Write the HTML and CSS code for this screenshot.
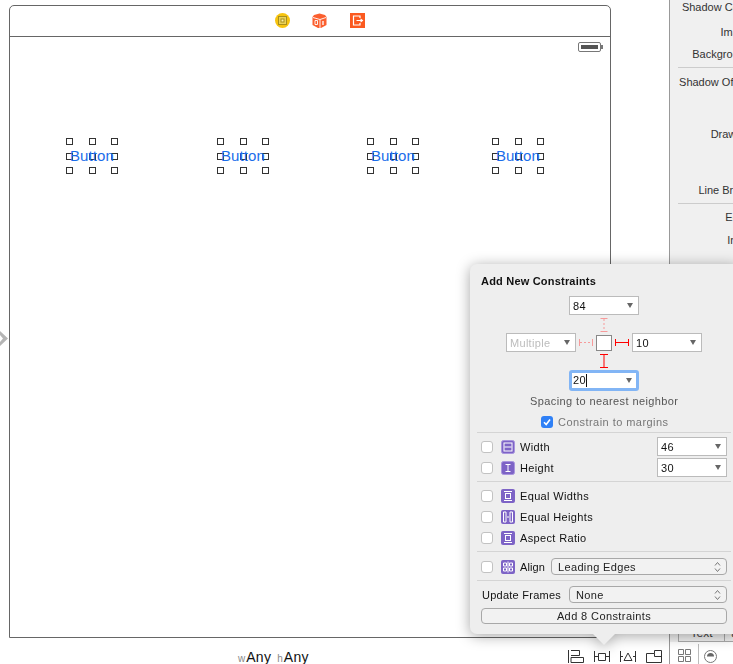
FILE: index.html
```html
<!DOCTYPE html>
<html lang="en">
  <head>
    <meta charset="UTF-8" />
    <title>Add New Constraints</title>
    <link rel="stylesheet" href="styles.css">
  </head>
  <body>
    <div class="page">
      <div class="canvas">
        <div class="frame">
          <div class="dock">
            <svg class="dock-icon" viewBox="0 0 15 15">
              <circle cx="7.5" cy="7.5" r="7.5" fill="#f7c40f" />
              <rect x="3.5" y="3.5" width="8" height="8" fill="#e9d25a" stroke="#a98f1c" />
              <rect x="6" y="6" width="3" height="3" fill="#fff3a8" stroke="#a98f1c" />
            </svg>
            <svg class="dock-icon" viewBox="0 0 15 15">
              <path d="M7.5 0.5 L13 2 L14.500 4 V12 L9 15 H6 L0.500 12 V4 L2 2 Z" fill="#fb5f2e" />
              <path d="M1 4.500 L8 6.500 L14 4.500 M8 6.500 V15" fill="none" stroke="#fff" stroke-width="0.9" />
              <path d="M3 7.500 H5.500 V11.500 H3 Z" fill="none" stroke="#fff" stroke-width="0.9" />
              <path d="M11 8 V12" stroke="#fff" stroke-width="1.300" />
            </svg>
            <svg class="dock-icon" viewBox="0 0 15 15">
              <rect width="15" height="15" fill="#fb5a20" />
              <path d="M10 5 V3 H3.500 V12 H10 V10" fill="none" stroke="#fff" stroke-width="1.200" />
              <path d="M6.500 7.500 H12.500 M10.500 5.800 L12.500 7.500 L10.500 9.200" fill="none" stroke="#fff" stroke-width="1.100" />
            </svg>
          </div>
          <div class="screen">
            <div class="status">
              <div class="battery"><div class="battery-fill"></div></div>
            </div>
            <div class="buttons">
              <div class="sel">
                <i></i><i></i><i></i><i></i><i></i><i></i><i></i><i></i><i></i>
                <span class="btn-label">Button</span>
              </div>
              <div class="sel">
                <i></i><i></i><i></i><i></i><i></i><i></i><i></i><i></i><i></i>
                <span class="btn-label">Button</span>
              </div>
              <div class="sel">
                <i></i><i></i><i></i><i></i><i></i><i></i><i></i><i></i><i></i>
                <span class="btn-label">Button</span>
              </div>
              <div class="sel">
                <i></i><i></i><i></i><i></i><i></i><i></i><i></i><i></i><i></i>
                <span class="btn-label">Button</span>
              </div>
            </div>
          </div>
        </div>
      </div>

      <div class="inspector">
        <div class="prop">Shadow Color</div>
        <div class="prop prop-image">Image</div>
        <div class="prop prop-bg">Background</div>
        <div class="sep-line"></div>
        <div class="prop prop-after-sep">Shadow Offset</div>
        <div class="prop prop-drawing">Drawing</div>
        <div class="prop prop-break">Line Break</div>
        <div class="sep-line"></div>
        <div class="prop prop-edge">Edge</div>
        <div class="prop prop-inset">Inset</div>
        <div class="mini-table">
          <div class="mini-cell">Text</div>
          <div class="mini-cell">a</div>
        </div>
      </div>

      <div class="bar">
        <div class="size-class">
          <span class="size-key">w</span><span class="size-val">Any</span>
          <span class="size-key size-key-h">h</span><span class="size-val">Any</span>
        </div>
        <div class="bar-icons">
          <svg class="bar-icon" viewBox="0 0 16 13">
            <path d="M0.500 0 V13 M3 0.500 H11.500 V5.500 H3 M3 7.500 H15.500 V12.500 H3 Z" fill="none" stroke="#333" />
          </svg>
          <svg class="bar-icon" viewBox="0 0 16 13">
            <path d="M0.500 1 V12 M15.500 1 V12 M1 6.500 H4 M12 6.500 H15 M4.500 3.500 H11.500 V10.500 H4.500 Z" fill="none" stroke="#333" />
          </svg>
          <svg class="bar-icon" viewBox="0 0 16 13">
            <path d="M0.500 1 V12 M15.500 1 V12 M1 6.500 H3 M13 6.500 H15 M8 3 L12 10.500 H4 Z" fill="none" stroke="#333" />
          </svg>
          <svg class="bar-icon" viewBox="0 0 16 13">
            <path d="M0.500 3.500 H8.500 V0.500 H15.500 V12.500 H0.500 Z M8.500 3.500 V6.500 H15.500" fill="none" stroke="#333" />
          </svg>
        </div>
      </div>

      <div class="bar-right">
        <svg class="grid-icon" viewBox="0 0 13 13">
          <path d="M0.500 0.500 H5.500 V5.500 H0.500 Z M7.500 0.500 H12.500 V5.500 H7.500 Z M0.500 7.500 H5.500 V12.500 H0.500 Z M7.500 7.500 H12.500 V12.500 H7.500 Z" fill="none" stroke="#777" />
        </svg>
        <div class="zoom-box">
          <svg class="zoom-icon" viewBox="0 0 13 13">
            <circle cx="6.500" cy="6.500" r="6" fill="#fff" stroke="#777" />
            <path d="M3 6.500 A3.500 3.500 0 0 1 10 6.500 Z" fill="#666" />
          </svg>
        </div>
      </div>
    </div>

    <svg class="entry-arrow" viewBox="0 0 8 16">
      <path d="M0 0 L8 7.500 L0 15 V11 L3 7.500 L0 4 Z" fill="#b5b5b5" />
    </svg>

    <div class="popover">
      <div class="pop-title">Add New Constraints</div>

      <div class="pin">
        <div></div>
        <div class="select select-top"><span>84</span></div>
        <div></div>

        <div></div>
        <svg class="pin-line" viewBox="0 0 56 18">
          <path d="M24.500 3.500 H31.500 M24.500 16.500 H31.500" stroke="#f79a9a" />
          <path d="M28 4 V16" stroke="#f79a9a" stroke-dasharray="2 2" />
        </svg>
        <div></div>

        <div class="select select-off"><span>Multiple</span></div>
        <svg class="pin-mid" viewBox="0 0 56 19">
          <path d="M3.500 6 V13 M16.500 6 V13" stroke="#f79a9a" />
          <path d="M4 9.500 H16" stroke="#f79a9a" stroke-dasharray="2 2" />
          <rect x="20.500" y="2.500" width="15" height="15" fill="#fff" stroke="#888" />
          <path d="M39.500 6 V13 M52.500 6 V13 M40 9.500 H52" stroke="#f00" />
        </svg>
        <div class="select"><span>10</span></div>

        <div></div>
        <svg class="pin-line" viewBox="0 0 56 18">
          <path d="M24 2.500 H32 M24 15.500 H32 M28 3 V15" stroke="#f00" />
        </svg>
        <div></div>

        <div></div>
        <div class="select select-focus"><span>20<b class="caret"></b></span></div>
        <div></div>
      </div>

      <div class="hint">Spacing to nearest neighbor</div>
      <div class="margins">
        <div class="check check-on">
          <svg viewBox="0 0 12 12"><path d="M3 6.200 L5.200 8.500 L9 3.500" fill="none" stroke="#fff" stroke-width="1.600" /></svg>
        </div>
        <span>Constrain to margins</span>
      </div>

      <div class="group group-first">
        <div class="row">
          <div class="check"></div>
          <svg class="purple" viewBox="0 0 14 14">
            <rect x="0.500" y="0.500" width="13" height="13" rx="2" fill="#7d63c6" stroke="#a995de" />
            <rect x="3" y="3" width="8" height="8" fill="none" stroke="#fff" />
            <path d="M3.500 7 H10.500" stroke="#fff" />
          </svg>
          <span class="row-label">Width</span>
          <div class="select select-row"><span>46</span></div>
        </div>
        <div class="row">
          <div class="check"></div>
          <svg class="purple" viewBox="0 0 14 14">
            <rect x="0.500" y="0.500" width="13" height="13" rx="2" fill="#7d63c6" stroke="#a995de" />
            <path d="M4.500 3.500 H9.500 M4.500 10.500 H9.500 M7 4 V10" stroke="#fff" />
          </svg>
          <span class="row-label">Height</span>
          <div class="select select-row"><span>30</span></div>
        </div>
      </div>

      <div class="group">
        <div class="row">
          <div class="check"></div>
          <svg class="purple" viewBox="0 0 14 14">
            <rect width="14" height="14" rx="2" fill="#7d63c6" />
            <path d="M3 2.500 H11 M3 11.500 H11" stroke="#fff" />
            <rect x="4.500" y="4.500" width="5" height="5" fill="none" stroke="#fff" />
          </svg>
          <span class="row-label">Equal Widths</span>
        </div>
        <div class="row">
          <div class="check"></div>
          <svg class="purple" viewBox="0 0 14 14">
            <rect width="14" height="14" rx="2" fill="#7d63c6" />
            <path d="M2.500 2 H5 V12 H2.500 Z M9 2 H11.500 V12 H9 Z M6 7 H8" fill="none" stroke="#fff" />
          </svg>
          <span class="row-label">Equal Heights</span>
        </div>
        <div class="row">
          <div class="check"></div>
          <svg class="purple" viewBox="0 0 14 14">
            <rect width="14" height="14" rx="2" fill="#7d63c6" />
            <path d="M3 2.500 H11 M3 11.500 H11" stroke="#fff" />
            <rect x="4.500" y="4.500" width="5" height="5" fill="none" stroke="#fff" />
          </svg>
          <span class="row-label">Aspect Ratio</span>
        </div>
      </div>

      <div class="group group-align">
        <div class="row">
          <div class="check"></div>
          <svg class="purple" viewBox="0 0 14 14">
            <rect width="14" height="14" rx="2" fill="#7d63c6" />
            <path d="M7 1.500 V12.500 M2.500 3 H5.500 V6 H2.500 Z M8.500 3 H11.500 V6 H8.500 Z M2.500 8 H5.500 V11 H2.500 Z M8.500 8 H11.500 V11 H8.500 Z" fill="none" stroke="#fff" />
          </svg>
          <span class="row-label row-label-align">Align</span>
          <div class="popup popup-align">
            <span>Leading Edges</span>
            <svg class="updown" viewBox="0 0 7 12"><path d="M1 4.500 L3.500 1.500 L6 4.500 M1 7.500 L3.500 10.500 L6 7.500" fill="none" stroke="#777" /></svg>
          </div>
        </div>
      </div>

      <div class="row row-update">
        <span class="update-label">Update Frames</span>
        <div class="popup popup-update">
          <span>None</span>
          <svg class="updown" viewBox="0 0 7 12"><path d="M1 4.500 L3.500 1.500 L6 4.500 M1 7.500 L3.500 10.500 L6 7.500" fill="none" stroke="#777" /></svg>
        </div>
      </div>
      <div class="add-btn">Add 8 Constraints</div>

      <div class="pop-arrow"></div>
    </div>
  </body>
</html>
```

FILE: styles.css
```css
* {
  box-sizing: border-box;
}

html,
body {
  margin: 0;
  height: 100%;
  overflow: hidden;
}

body {
  position: relative;
  font-family: "Liberation Sans", Arial, sans-serif;
  font-size: 11px;
  color: #222;
  background-color: white;
}

.page {
  display: grid;
  grid-template-columns: 669px 64px;
  grid-template-rows: 642px 22px;
  height: 664px;
}

/* storyboard */
.canvas {
  padding: 5px 0 0 9px;
}

.frame {
  width: 602px;
  height: 633px;
  border: 1px solid #666;
  border-radius: 5px 5px 0 0;
}

.dock {
  display: grid;
  grid-template-columns: 37px 38px 15px;
  height: 31px;
  padding: 7px 0 0 265px;
  border-bottom: 1px solid #666;
}

.dock-icon {
  width: 15px;
  height: 15px;
}

.status {
  display: flex;
  justify-content: flex-end;
  padding: 5px 9px 0 0;
}

.battery {
  position: relative;
  width: 23px;
  height: 10px;
  padding: 2px;
  border: 1px solid #777;
  border-radius: 2px;
}

.battery::after {
  content: "";
  position: absolute;
  top: 2px;
  right: -3px;
  width: 2px;
  height: 4px;
  background-color: #777;
}

.battery-fill {
  height: 100%;
  background-color: #555;
}

.buttons {
  display: grid;
  grid-template-columns: 151px 150px 125px 52px;
  margin-top: 86px;
  padding-left: 56px;
}

.sel {
  position: relative;
  display: grid;
  grid-template-columns: repeat(3, 7px);
  grid-template-rows: repeat(3, 7px);
  justify-content: space-between;
  align-content: space-between;
  width: 52px;
  height: 36px;
}

.sel i {
  border: 1px solid #333;
}

.btn-label {
  position: absolute;
  top: 0;
  left: 0;
  right: 0;
  bottom: 0;
  display: flex;
  align-items: center;
  justify-content: center;
  padding-bottom: 2px;
  font-size: 15px;
  letter-spacing: 0.1px;
  color: #1a6dea;
}

/* inspector on the right */
.inspector {
  display: flex;
  flex-direction: column;
  grid-row: 1;
  grid-column: 2;
  overflow: hidden;
  border-left: 1px solid #999;
  background-color: #f0f0f0;
  color: #333;
}

.prop {
  flex-shrink: 0;
  width: 81px;
  height: 14px;
  line-height: 14px;
  text-align: right;
  white-space: nowrap;
}

.prop-image { margin-top: 11px; }
.prop-bg { margin-top: 8px; }
.prop-after-sep { margin-top: 7px; }
.prop-drawing { margin-top: 38px; }
.prop-break { margin-top: 42px; }
.prop-edge { margin-top: 6px; }
.prop-inset { margin-top: 9px; }

.sep-line {
  flex-shrink: 0;
  width: 60px;
  height: 1px;
  margin: 6px 0 0 8px;
  background-color: #ccc;
}

.mini-table {
  display: grid;
  grid-template-columns: 46px 20px;
  height: 20px;
  margin: auto 0 0 8px;
  border-bottom: 1px solid #aaa;
}

.mini-cell {
  display: flex;
  align-items: flex-end;
  justify-content: center;
  padding-bottom: 1px;
  border-left: 1px solid #aaa;
  font-size: 12px;
  color: #444;
}

/* bottom bar */
.bar {
  display: flex;
  align-items: center;
  padding: 6px 7px 0 238px;
}

.size-class {
  display: flex;
  align-items: baseline;
  margin-top: 1px;
  white-space: nowrap;
}

.size-key {
  font-size: 10px;
  color: #888;
  margin-right: 1px;
}

.size-key-h {
  margin-left: 6px;
}

.size-val {
  font-size: 14px;
  letter-spacing: 0.3px;
  color: #111;
}

.bar-icons {
  display: flex;
  gap: 10px;
  margin-left: auto;
}

.bar-icon {
  width: 16px;
  height: 13px;
}

.bar-right {
  display: flex;
  align-items: flex-end;
  border-left: 1px solid #999;
  padding-left: 8px;
}

.grid-icon {
  width: 13px;
  height: 13px;
  margin-bottom: 2px;
}

.zoom-box {
  flex: 1;
  height: 20px;
  margin-left: 7px;
  padding: 6px 0 0 5px;
  border-left: 1px solid #bbb;
}

.zoom-icon {
  display: block;
  width: 13px;
  height: 13px;
}

.entry-arrow {
  position: absolute;
  top: 331px;
  left: 0;
  width: 8px;
  height: 16px;
}

/* popover over everything */
.popover {
  position: absolute;
  top: 264px;
  left: 470px;
  width: 270px;
  height: 370px;
  padding-top: 10px;
  border-radius: 7px;
  background-color: #eeeeee;
  filter: drop-shadow(0 2px 7px rgba(0, 0, 0, 0.35));
}

.pop-arrow {
  position: absolute;
  top: 100%;
  left: 123px;
  width: 22px;
  height: 11px;
  background-color: #eeeeee;
  clip-path: polygon(0 0, 100% 0, 50% 100%);
}

.pop-title {
  height: 14px;
  line-height: 14px;
  padding-left: 11px;
  font-weight: bold;
  letter-spacing: 0.2px;
  color: #111;
}

.pin {
  display: grid;
  grid-template-columns: 70px 56px 70px;
  grid-template-rows: 19px 18px 19px 18px 21px;
  margin: 8px 0 0 36px;
}

.pin-line,
.pin-mid {
  display: block;
  width: 56px;
}

.pin-line {
  height: 18px;
}

.pin-mid {
  height: 19px;
}

.select {
  display: flex;
  align-items: center;
  justify-content: space-between;
  width: 70px;
  height: 19px;
  padding: 0 5px 0 3px;
  border: 1px solid #bbb;
  background-color: white;
  font-size: 11px;
  letter-spacing: 0.3px;
  color: #111;
}

.select::after {
  content: "";
  border-left: 3.5px solid transparent;
  border-right: 3.5px solid transparent;
  border-top: 5px solid #666;
}

.select-top {
  margin-left: -7px;
}

.select-off {
  color: #bcbcbc;
}

.select-focus {
  height: 21px;
  margin-left: -7px;
  border: 3px solid #82b5f5;
  border-radius: 3px;
  padding: 0 4px 0 1px;
}

.caret {
  display: inline-block;
  width: 1px;
  height: 13px;
  background-color: #111;
  vertical-align: -3px;
}

.hint {
  height: 14px;
  margin-top: 3px;
  padding-left: 60px;
  line-height: 14px;
  letter-spacing: 0.4px;
  color: #555;
}

.margins {
  display: flex;
  align-items: center;
  gap: 5px;
  height: 14px;
  margin-top: 7px;
  padding-left: 71px;
  letter-spacing: 0.45px;
  color: #777;
}

.check {
  flex-shrink: 0;
  width: 12px;
  height: 12px;
  border: 1px solid #c2c2c2;
  border-radius: 3px;
  background-color: white;
}

.check-on {
  border: 0;
  background-color: #2f80f6;
}

.check-on svg {
  display: block;
  width: 12px;
  height: 12px;
}

.group {
  width: 254px;
  margin-left: 7px;
  padding: 3px 0;
  border-top: 1px solid #d4d4d4;
}

.group-first {
  margin-top: 3px;
}

.group-align {
  padding-top: 4px;
  padding-bottom: 3px;
  border-bottom: 1px solid #d4d4d4;
}

.group .row {
  margin-left: -7px;
  width: 257px;
}

.row {
  display: flex;
  align-items: center;
  height: 21px;
  padding-left: 11px;
}

.purple {
  flex-shrink: 0;
  width: 14px;
  height: 14px;
  margin-left: 8px;
}

.row-label {
  margin-left: 5px;
  letter-spacing: 0.35px;
  color: #111;
}

.row-label-align {
  letter-spacing: 0.1px;
}

.select-row {
  margin-left: auto;
}

.popup {
  display: flex;
  align-items: center;
  justify-content: space-between;
  height: 17px;
  padding: 0 5px 0 6px;
  border: 1px solid #a8a8a8;
  border-radius: 4px;
  background-color: #f2f2f2;
  letter-spacing: 0.35px;
  color: #222;
}

.popup-align {
  width: 176px;
  margin-left: auto;
}

.popup-update {
  width: 158px;
  margin-left: auto;
}

.updown {
  width: 7px;
  height: 12px;
}

.row-update {
  width: 257px;
  margin-top: 3px;
}

.update-label {
  padding-left: 1px;
  letter-spacing: 0.25px;
  color: #111;
}

.add-btn {
  width: 246px;
  height: 16px;
  margin: 3px 0 0 11px;
  border: 1px solid #a8a8a8;
  border-radius: 4px;
  background-color: #f2f2f2;
  line-height: 14px;
  text-align: center;
  letter-spacing: 0.4px;
  color: #222;
}
```
